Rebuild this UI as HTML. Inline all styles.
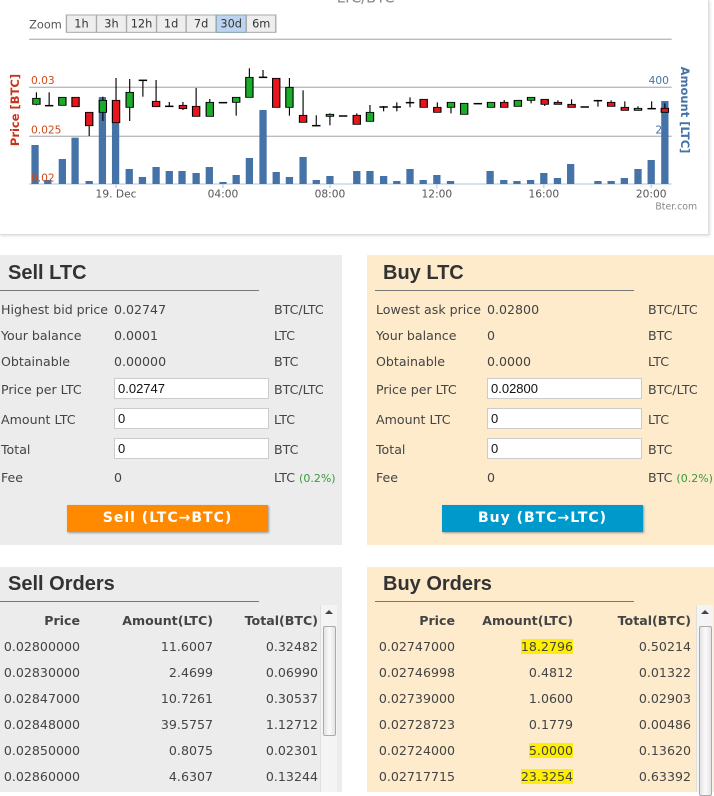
<!DOCTYPE html>
<html><head><meta charset="utf-8"><style>
*{margin:0;padding:0;box-sizing:border-box}
body{width:714px;height:792px;overflow:hidden;background:#fff;font-family:"DejaVu Sans","Liberation Sans",sans-serif;font-size:12.6px;color:#444;position:relative}
.abs{position:absolute;white-space:nowrap}
.panel{position:absolute}
.gray{background:#ececec}
.tan{background:#fdebcc}
h2{position:absolute;font-family:"Liberation Sans",sans-serif;font-weight:bold;font-size:20px;color:#333}
.ul{position:absolute;height:1px;background:#777}
.inp{position:absolute;background:#fff;border:1px solid #ccc;height:21px;width:155px;font-family:"Liberation Sans",sans-serif;font-size:13px;color:#111;padding:2px 3px}
.btn{position:absolute;height:27px;width:201px;color:#fff;font-weight:bold;font-size:14px;text-align:center;line-height:27px;letter-spacing:1px;box-shadow:1px 1px 2px #999}
.fee{color:#3a9a3a;font-size:11px}
.r{text-align:right}
.th{font-weight:bold;color:#444}
.hl{background:#ffee00}
.sb{position:absolute;width:17px;background:#f4f4f4;border-left:1px solid #e0e0e0}
.th2{position:absolute;left:2px;width:13px;background:linear-gradient(90deg,#e4e4e4,#fafafa,#e4e4e4);border:1px solid #aaa;border-radius:2px}
</style></head><body>
<div class="abs" style="left:0;top:0;width:709px;height:235px;border-right:1px solid #ddd;border-bottom:1px solid #ddd;box-shadow:1px 1px 3px #ddd"></div>
<svg id="ch" class="abs" style="left:0;top:0" width="714" height="240" viewBox="0 0 1569 720" preserveAspectRatio="none">
<text x="740" y="8" font-size="44" fill="#888" font-family="DejaVu Sans">LTC/BTC</text>
<text x="64" y="85" font-size="34" fill="#555" font-family="DejaVu Sans">Zoom</text>
<rect x="146" y="45" width="460" height="52" fill="#eee" stroke="#aaa" stroke-width="3"/>
<rect x="475" y="45" width="66" height="52" fill="#bcd4f0" stroke="#8aa" stroke-width="3"/>
<path d="M212 45v52M278 45v52M344 45v52M409 45v52M541 45v52" stroke="#aaa" stroke-width="3"/>
<g font-size="34" fill="#333" font-family="DejaVu Sans" text-anchor="middle">
<text x="179" y="83">1h</text><text x="245" y="83">3h</text><text x="311" y="83">12h</text><text x="376" y="83">1d</text><text x="442" y="83">7d</text><text x="508" y="83">30d</text><text x="574" y="83">6m</text>
</g>
<path d="M64 118H1476M64 262H1476M64 409H1476" stroke="#bbb" stroke-width="4"/>
<path d="M64 552H1476" stroke="#c0d0e0" stroke-width="4"/>
<g fill="#4572a7" id="bars"></g>
<g id="cd"></g>
<text x="68" y="252" font-size="32" fill="#d04a1a" font-family="DejaVu Sans">0.03</text>
<text x="68" y="400" font-size="32" fill="#d04a1a" font-family="DejaVu Sans">0.025</text>
<text x="68" y="545" font-size="32" fill="#d04a1a" font-family="DejaVu Sans">0.02</text>
<text x="1470" y="252" font-size="32" fill="#4572a7" text-anchor="end" font-family="DejaVu Sans">400</text>
<text x="1470" y="400" font-size="32" fill="#4572a7" text-anchor="end" font-family="DejaVu Sans">20</text>
<path d="M255 552v12M490 552v12M725 552v12M960 552v12M1195 552v12M1431 552v12" stroke="#c0d0e0" stroke-width="3"/>
<g font-size="32" fill="#555" text-anchor="middle" font-family="DejaVu Sans">
<text x="255" y="592">19. Dec</text><text x="490" y="592">04:00</text><text x="725" y="592">08:00</text><text x="960" y="592">12:00</text><text x="1195" y="592">16:00</text><text x="1431" y="592">20:00</text>
<text x="1486" y="628" font-size="28" fill="#888">Bter.com</text>
</g>
</svg>
<svg class="abs" style="left:0;top:0" width="714" height="240">
<text transform="translate(19,110) rotate(-90)" font-size="11.5" font-weight="bold" fill="#c8341a" text-anchor="middle" font-family="DejaVu Sans">Price [BTC]</text>
<text transform="translate(681,110) rotate(90)" font-size="11.5" font-weight="bold" fill="#4572a7" text-anchor="middle" font-family="DejaVu Sans">Amount [LTC]</text>
</svg>
<script>
var b=[[77,435],[105,540],[137,477],[165,413],[196,543],[225,291],[254,300],[284,507],[313,531],[343,501],[372,513],[400,513],[431,519],[460,501],[490,546],[519,525],[548,474],[578,330],[607,516],[636,531],[666,471],[695,540],[725,528],[784,513],[813,513],[843,528],[872,543],[901,507],[930,540],[960,525],[990,543],[1077,513],[1107,540],[1136,543],[1166,540],[1195,519],[1225,534],[1254,492],[1314,543],[1343,543],[1372,534],[1402,507],[1431,480],[1461,303]];
var s='';b.forEach(function(a){s+='<rect x="'+(a[0]-8)+'" y="'+a[1]+'" width="16" height="'+(552-a[1])+'"/>'});
document.getElementById('bars').innerHTML=s;
var c=[[80,'g',277,316,295,313],[108,'d',277,318,316,318],[137,'g',292,316,292,316],[166,'r',292,320,292,320],[196,'r',337,408,337,377],[226,'g',290,363,301,337],[255,'r',234,368,301,368],[285,'g',237,363,277,322],[314,'d',240,290,240,241],[343,'r',240,320,304,320],[372,'d',306,320,318,319],[402,'r',306,330,316,326],[431,'r',264,349,319,349],[461,'g',297,349,307,349],[490,'d',307,307,307,308],[519,'g',292,347,292,307],[548,'g',205,292,232,292],[578,'d',210,231,231,232],[607,'r',235,322,235,322],[636,'g',234,347,262,322],[666,'r',271,367,346,367],[695,'d',346,376,376,377],[725,'g',340,376,343,349],[754,'d',347,347,347,348],[784,'r',340,373,346,373],[813,'g',315,364,337,364],[843,'d',318,334,320,321],[872,'d',307,334,320,321],[901,'d',292,322,307,308],[931,'r',298,322,298,322],[961,'r',307,337,322,337],[991,'g',307,340,307,322],[1020,'g',310,343,310,343],[1050,'d',310,310,310,311],[1079,'g',307,322,307,322],[1108,'r',300,322,307,322],[1138,'g',301,319,301,319],[1167,'g',292,310,292,301],[1197,'r',298,318,298,313],[1226,'r',301,313,307,313],[1256,'r',298,322,313,322],[1285,'d',320,320,320,321],[1314,'d',301,320,301,302],[1343,'r',301,319,307,319],[1373,'r',304,331,322,331],[1402,'g',319,331,325,331],[1432,'d',304,325,325,326],[1461,'r',310,337,325,337]];
s='';c.forEach(function(a){s+='<path d="M'+a[0]+' '+a[2]+'V'+a[3]+'" stroke="#000" stroke-width="2.5"/>';
var f=a[1]=='g'?'#1aad2a':a[1]=='r'?'#e8161c':'#000';
s+='<rect x="'+(a[0]-8)+'" y="'+a[4]+'" width="16" height="'+Math.max(2,a[5]-a[4])+'" fill="'+f+'" stroke="#000" stroke-width="2.5"/>'});
document.getElementById('cd').innerHTML=s;
var k=1569/2142;
Array.prototype.forEach.call(document.querySelectorAll('#ch text'),function(t){var x=t.getAttribute('x'),y=t.getAttribute('y');t.setAttribute('x',0);t.setAttribute('y',0);t.setAttribute('transform','translate('+x+','+y+') scale('+k+',1)');});
</script>

<div class="panel gray" style="left:0;top:255px;width:342px;height:290px"></div>
<h2 style="left:8px;top:262px">Sell LTC</h2><div class="ul" style="left:0;top:290px;width:259px"></div>
<div class="abs" style="left:1px;top:302px">Highest bid price</div><div class="abs" style="left:114px;top:302px">0.02747</div><div class="abs" style="left:274px;top:302px">BTC/LTC</div>
<div class="abs" style="left:1px;top:328px">Your balance</div><div class="abs" style="left:114px;top:328px">0.0001</div><div class="abs" style="left:274px;top:328px">LTC</div>
<div class="abs" style="left:1px;top:354px">Obtainable</div><div class="abs" style="left:114px;top:354px">0.00000</div><div class="abs" style="left:274px;top:354px">BTC</div>
<div class="abs" style="left:1px;top:382px">Price per LTC</div><div class="inp" style="left:114px;top:378px">0.02747</div><div class="abs" style="left:274px;top:382px">BTC/LTC</div>
<div class="abs" style="left:1px;top:412px">Amount LTC</div><div class="inp" style="left:114px;top:408px">0</div><div class="abs" style="left:274px;top:412px">LTC</div>
<div class="abs" style="left:1px;top:442px">Total</div><div class="inp" style="left:114px;top:438px">0</div><div class="abs" style="left:274px;top:442px">BTC</div>
<div class="abs" style="left:1px;top:470px">Fee</div><div class="abs" style="left:114px;top:470px">0</div><div class="abs" style="left:274px;top:470px">LTC <span class="fee">(0.2%)</span></div>
<div class="btn" style="left:67px;top:505px;background:#ff8a00">Sell (LTC→BTC)</div>

<div class="panel tan" style="left:367px;top:255px;width:347px;height:290px"></div>
<h2 style="left:383px;top:262px">Buy LTC</h2><div class="ul" style="left:375px;top:290px;width:259px"></div>
<div class="abs" style="left:376px;top:302px">Lowest ask price</div><div class="abs" style="left:487px;top:302px">0.02800</div><div class="abs" style="left:648px;top:302px">BTC/LTC</div>
<div class="abs" style="left:376px;top:328px">Your balance</div><div class="abs" style="left:487px;top:328px">0</div><div class="abs" style="left:648px;top:328px">BTC</div>
<div class="abs" style="left:376px;top:354px">Obtainable</div><div class="abs" style="left:487px;top:354px">0.0000</div><div class="abs" style="left:648px;top:354px">LTC</div>
<div class="abs" style="left:376px;top:382px">Price per LTC</div><div class="inp" style="left:487px;top:378px">0.02800</div><div class="abs" style="left:648px;top:382px">BTC/LTC</div>
<div class="abs" style="left:376px;top:412px">Amount LTC</div><div class="inp" style="left:487px;top:408px">0</div><div class="abs" style="left:648px;top:412px">LTC</div>
<div class="abs" style="left:376px;top:442px">Total</div><div class="inp" style="left:487px;top:438px">0</div><div class="abs" style="left:648px;top:442px">BTC</div>
<div class="abs" style="left:376px;top:470px">Fee</div><div class="abs" style="left:487px;top:470px">0</div><div class="abs" style="left:648px;top:470px">BTC <span class="fee">(0.2%)</span></div>
<div class="btn" style="left:442px;top:505px;background:#0099cc">Buy (BTC→LTC)</div>

<div class="panel gray" style="left:0;top:567px;width:342px;height:225px"></div>
<h2 style="left:8px;top:573px">Sell Orders</h2><div class="ul" style="left:0;top:601px;width:259px"></div>
<div class="sb" style="left:320px;top:605px;height:187px"><div style="position:absolute;left:4px;top:5px;border:4px solid transparent;border-bottom:4px solid #444;border-top:0"></div><div class="th2" style="top:21px;height:110px"></div></div>
<div class="panel tan" style="left:367px;top:567px;width:347px;height:225px"></div>
<h2 style="left:383px;top:573px">Buy Orders</h2><div class="ul" style="left:375px;top:601px;width:259px"></div>
<div class="sb" style="left:696px;top:605px;height:187px"><div style="position:absolute;left:4px;top:5px;border:4px solid transparent;border-bottom:4px solid #444;border-top:0"></div><div class="th2" style="top:21px;height:170px"></div></div>
<script>
function tbl(x,rows,cols){var s='';var y=613;
s+='<div class="abs r th" style="left:'+(cols[0]-100)+'px;width:100px;top:'+y+'px">Price</div><div class="abs r th" style="left:'+(cols[1]-120)+'px;width:120px;top:'+y+'px">Amount(LTC)</div><div class="abs r th" style="left:'+(cols[2]-120)+'px;width:120px;top:'+y+'px">Total(BTC)</div>';
rows.forEach(function(r,i){y=639+26*i;
s+='<div class="abs r" style="left:'+(cols[0]-100)+'px;width:100px;top:'+y+'px">'+r[0]+'</div><div class="abs r" style="left:'+(cols[1]-120)+'px;width:120px;top:'+y+'px">'+(r[3]?'<span class="hl">'+r[1]+'</span>':r[1])+'</div><div class="abs r" style="left:'+(cols[2]-120)+'px;width:120px;top:'+y+'px">'+r[2]+'</div>'});
document.write(s)}
tbl(0,[['0.02800000','11.6007','0.32482'],['0.02830000','2.4699','0.06990'],['0.02847000','10.7261','0.30537'],['0.02848000','39.5757','1.12712'],['0.02850000','0.8075','0.02301'],['0.02860000','4.6307','0.13244']],[80,213,318]);
tbl(0,[['0.02747000','18.2796','0.50214',1],['0.02746998','0.4812','0.01322'],['0.02739000','1.0600','0.02903'],['0.02728723','0.1779','0.00486'],['0.02724000','5.0000','0.13620',1],['0.02717715','23.3254','0.63392',1]],[455,573,691]);
</script>
</body></html>
